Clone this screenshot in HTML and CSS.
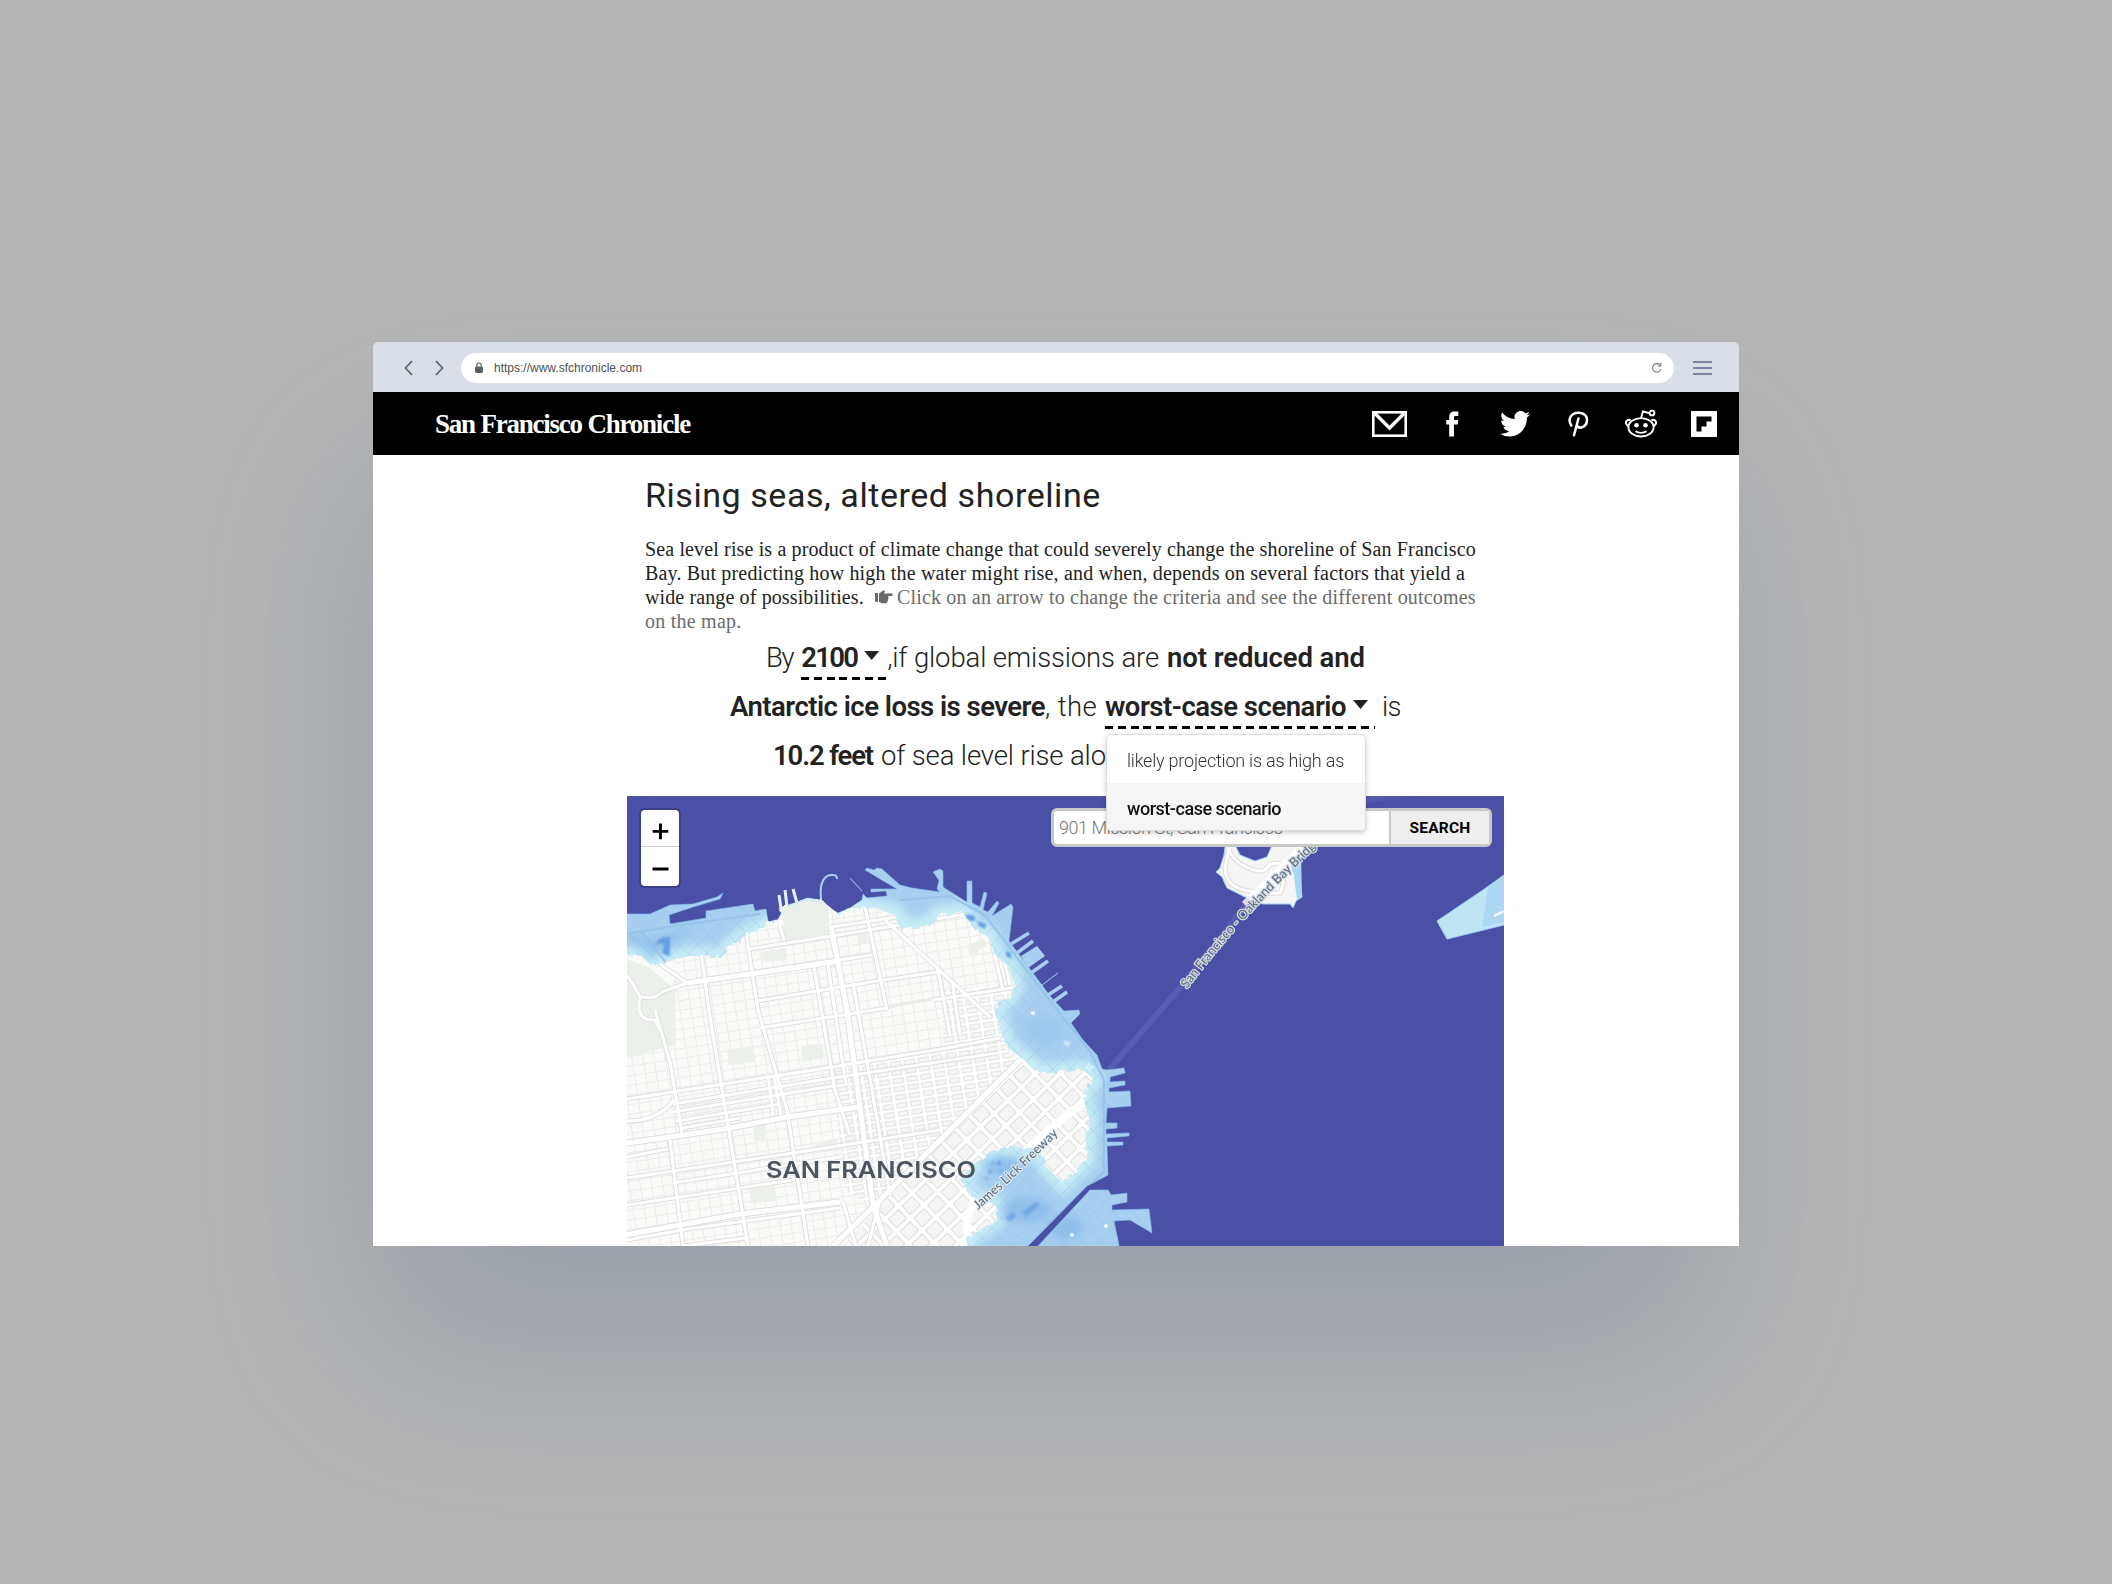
FILE: index.html
```html
<!DOCTYPE html>
<html lang="en">
<head>
<meta charset="utf-8">
<title>San Francisco Chronicle</title>
<link rel="stylesheet" href="styles.css">
</head>
<body>
<main class="window">
  <div class="chrome">
    <svg class="nav-arrows" width="40" height="16" viewBox="0 0 40 16" fill="none" stroke="#5f636b" stroke-width="1.7"><path d="M8 1 1.5 8 8 15M32 1l6.500 7L32 15"/></svg>
    <div class="address">
      <svg width="10" height="12" viewBox="0 0 10 12"><rect x="1" y="4.500" width="8" height="6.500" rx="1.800" fill="#5b5e66"/><path d="M2.800 5V3.200a2.200 2.200 0 0 1 4.400 0V5" fill="none" stroke="#5b5e66" stroke-width="1.100"/></svg>
      <span class="url">https://www.sfchronicle.com</span>
      <svg class="reload" width="12" height="12" viewBox="0 0 12 12" fill="none" stroke="#777" stroke-width="1.100"><path d="M10 7.200A4.300 4.300 0 1 1 8.900 2.800M9.800 1v3H6.800"/></svg>
    </div>
    <svg class="burger" width="19" height="14" viewBox="0 0 19 14" stroke="#5a6a86" stroke-width="1.600"><path d="M0 1h19M0 7h19M0 13h19"/></svg>
  </div>
  <header class="masthead">
    <span class="logo">San Francisco Chronicle</span>
    <nav class="share">
      <svg width="35" height="26" viewBox="0 0 35 26" fill="none" stroke="#fff"><rect x="1.300" y="1.300" width="32.400" height="23.400" stroke-width="2.600"/><path d="M3 2.500 17.500 17 32 2.500" stroke-width="3.400"/></svg>
      <svg class="fb" width="13" height="26" viewBox="0 0 13 26" fill="#fff"><path d="M3.200 25.500V13.400H.3V8.900h2.900V6.200C3.200 2.300 5 .5 8.500.5h3.800V5H9.700C8.300 5 8 5.600 8 6.700v2.200h4.200l-.5 4.500H8v12.100z"/></svg>
      <svg class="tw" width="30" height="26" viewBox="0 0 24 20" preserveAspectRatio="none" fill="#fff"><path d="M24 2.400a10 10 0 0 1-2.800.8A4.900 4.900 0 0 0 23.300.5a10 10 0 0 1-3.100 1.200 4.900 4.900 0 0 0-8.400 4.500A14 14 0 0 1 1.700 1.100a4.900 4.900 0 0 0 1.500 6.600A4.900 4.900 0 0 1 1 7.100a4.900 4.900 0 0 0 3.900 4.900 5 5 0 0 1-2.200.1 4.900 4.900 0 0 0 4.600 3.400A9.900 9.900 0 0 1 0 17.500a14 14 0 0 0 7.500 2.200c9.100 0 14-7.500 14-14v-.6A10 10 0 0 0 24 2.400z"/></svg>
      <svg class="pin" width="21" height="26" viewBox="0 0 21 26" fill="none" stroke="#fff" stroke-width="2.500" stroke-linecap="round"><path d="M3.300 14.500C-.5 9 2.500 1.700 10.500 1.700c6 0 9 3.800 8.400 8.300-.8 6.500-7.900 8.200-9.700 4.800M10.500 7.500 6 24.300"/></svg>
      <svg class="reddit" width="32" height="29" viewBox="0 0 32 29" fill="none" stroke="#fff" stroke-width="1.900"><ellipse cx="16" cy="18.300" rx="12.600" ry="9.200"/><path d="M16 9l2-6.500 6.500 1.600M5.500 11.600C3 9.500 0 12.500 1.300 15c.5 1 1.500 1.700 2.300 1.700M26.500 11.600C29 9.500 32 12.500 30.700 15c-.5 1-1.500 1.700-2.300 1.700M10.500 22.200c3 2.200 8 2.200 11 0"/><circle cx="27" cy="4" r="2.400"/><circle cx="11.500" cy="16.300" r="2.300" fill="#fff" stroke="none"/><circle cx="20.500" cy="16.300" r="2.300" fill="#fff" stroke="none"/></svg>
      <svg class="flip" width="26" height="26" viewBox="0 0 26 26"><path fill="#fff" d="M0 0h26v26H0z"/><path d="M5.500 5.500h15v5h-5v5h-5v5h-5z"/></svg>
    </nav>
  </header>
  <article class="story">
    <h1>Rising seas, altered shoreline</h1>
    <p class="intro">
      <span class="line l1">Sea level rise is a product of climate change that could severely change the shoreline of San Francisco</span>
      <span class="line l2">Bay. But predicting how high the water might rise, and when, depends on several factors that yield a</span>
      <span class="line"><span class="l3">wide range of possibilities.</span><svg class="hand" width="18" height="14" viewBox="0 0 18 14" fill="#6b6b6b"><path d="M0 3h3v9H0zM4 3.500 8.500.3c1-.3 1.600.6 1.200 1.400L9 3.500h7.600c1.500 0 1.500 2.400 0 2.400H13c.8.5.8 1.700 0 2.200.6.500.5 1.600-.2 2 .3.700 0 1.500-.7 1.700-.2 1-.8 1.500-2 1.500H7L4 12z"/></svg><span class="l4 muted">Click on an arrow to change the criteria and see the different outcomes</span></span>
      <span class="line l5 muted">on the map.</span>
    </p>
    <div class="scenario">
      <div class="row r1"><span class="by">By</span><span class="pick p1"><b>2100</b><i class="caret"></i></span><span class="emissions">,if global emissions are</span><b class="reduced">not reduced and</b></div>
      <div class="row r2"><b class="ice">Antarctic ice loss is severe</b><span class="the">, the</span><span class="pick p2"><b>worst-case scenario</b><i class="caret"></i></span><span class="is">is</span></div>
      <div class="row r3"><b class="feet">10.2 feet</b><span class="rise">of sea level rise along</span></div>
      <div class="menu">
        <div class="item">likely projection is as high as</div>
        <div class="item on">worst-case scenario</div>
      </div>
    </div>
  </article>
  <section class="map">
    <svg class="tiles" width="877" height="450" viewBox="627 796 877 450">
      <defs>
        <filter id="rag" x="-5%" y="-5%" width="110%" height="110%"><feTurbulence type="fractalNoise" baseFrequency=".16" numOctaves="2" seed="4"/><feDisplacementMap in="SourceGraphic" scale="9"/></filter>
        <filter id="soft"><feGaussianBlur stdDeviation="4"/></filter>
        <filter id="soft1"><feGaussianBlur stdDeviation="1.200"/></filter>
        <pattern id="minor" width="11" height="9.500" patternUnits="userSpaceOnUse" patternTransform="rotate(-8.800)"><path d="M0 .5h11M.5 0v9.500" stroke="#ebebea" fill="none"/></pattern>
        <pattern id="dense" width="14" height="8.300" patternUnits="userSpaceOnUse" patternTransform="translate(834 1078) rotate(-8.800)"><rect width="14" height="8.300" fill="#fff"/><rect x="2" y="1.800" width="10" height="4.700" fill="#f7f7f5" stroke="#dcdcdc" stroke-width=".9"/></pattern>
        <pattern id="soma" width="19" height="17" patternUnits="userSpaceOnUse" patternTransform="translate(873 1207) rotate(-44)"><rect width="19" height="17" fill="#fff"/><rect x="2.500" y="2.500" width="14" height="12" fill="#f5f5f3" stroke="#d9d9d9" stroke-width=".9"/></pattern>
        <pattern id="wet" width="14" height="12" patternUnits="userSpaceOnUse" patternTransform="rotate(-44)"><path d="M0 .5h14M.5 0v12" stroke="#8fbce6" stroke-opacity=".28" fill="none"/></pattern>
        <path id="dryland" d="M620 956 640 955 652 966 665 962 690 956 722 956 735 943 747 935 768 924 780 919 782 907 797 902 822 900 838 914 850 909 870 908 895 914 900 928 915 928 933 925 938 916 962 912 975 930 988 936 994 954 1008 966 1015 985 1008 997 993 1008 1000 1027 1007 1047 1022 1058 1035 1070 1050 1073 1083 1070 1092 1078 1083 1097 1088 1117 1086 1143 1087 1158 1063 1183 1047 1167 1040 1150 1010 1146 987 1154 972 1168 960 1180 973 1198 997 1206 995 1220 983 1228 967 1236 965 1256 620 1256z"/>
        <path id="flood" d="M620 914 650 914 670 905 693 904 717 897 723 893 720 899 693 907 669 915 670 924 706 918 706 911 753 904 755 911 766 909 768 922 780 919 782 907 797 902 807 898 822 900 827 907 838 913 850 908 862 900 863 894 867 898 887 896 886 891 871 892 871 889 897 889 865 870 867 868 874 870 877 868 882 869 900 885 912 888 940 892 937 889 939 880 933 872 940 869 943 871 943 887 965 901 967 902 967 881 972 881 972 903 980 907 984 892 987 893 983 910 988 912 997 901 999 903 992 916 1011 904 1013 907 1009 941 1030 969 1050 996 1064 1011 1079 1010 1080 1014 1071 1023 1083 1040 1097 1055 1102 1069 1107 1070 1124 1068 1125 1073 1110 1077 1110 1082 1125 1081 1125 1085 1109 1088 1109 1092 1130 1091 1131 1106 1107 1108 1106 1123 1117 1123 1117 1128 1106 1129 1106 1134 1129 1133 1129 1136 1107 1138 1107 1142 1123 1142 1123 1145 1107 1146 1108 1175 1087 1186 1028 1246 1028 1256 620 1256zM1038 1246 1090 1190 1108 1190 1111 1195 1127 1193 1127 1202 1112 1205 1112 1210 1149 1209 1152 1233 1130 1220 1114 1221 1120 1250 1036 1250z"/>
        <clipPath id="wetclip"><use href="#flood"/></clipPath>
        <mask id="dry"><use href="#dryland" fill="#fff" filter="url(#rag)"/></mask>
        <g id="roads" fill="none">
          <path d="M697 923 710 1017 748 1246M743 913 758 1010 787 1110 808 1246M865 907 887 1010M780 926 784 940M655 1010 670 1062 682 1133M670 1140 683 1246M814 967 835 1090 850 1135M828 965 846 1085M853 983 872 1090 890 1195M938 970 950 1035M952 980 960 1035M990 935 1003 990M997 930 1010 985M774 1076 781 1115M768 1075 773 1115"/>
          <path d="M687 983 872 955M750 949 832 936 960 915M831 927 897 917M757 1001 877 981 938 972M933 1000 1017 987M760 1028 887 1008M627 1099 833 1067 947 1048 1000 1038M673 1104 833 1078 997 1053M673 1112 833 1086M676 1121 780 1104M627 1157 668 1149M682 1128 740 1118M627 1178 793 1153 940 1130M673 1183 840 1157M627 1205 793 1180M627 1240 688 1229 840 1208M684 1246 745 1238"/>
          <path d="M640 950 687 983 670 989C655 992 662 1000 640 997C634 985 628 975 620 968M640 997C635 1020 648 1020 655 1020L660 1030M627 1121C650 1121 665 1112 674 1100M990 1017 883 918M843 1202 856 1246M868 1246 880 1200"/>
        </g>
        <g id="main" fill="none"><path d="M620 1144 670 1137 730 1128 787 1117 860 1107M831 927 847 1010 873 1205 887 1246M687 983 840 961M625 1235 740 1214 840 1202M833 1246 873 1207 1020 1060"/></g>
        <path id="island-roads" fill="none" d="M1229 848 1225 868Q1226 886 1244 890 1262 894 1280 893 1284 885 1284 874M1229 850Q1236 866 1258 871 1266 872 1270 864L1280 863"/>
        <path id="bridge" d="M1187 989Q1240 917 1326 838"/>
        <path id="freeway" d="M978 1210Q1020 1173 1064 1128"/>
      </defs>
      <path fill="#4a50a6" d="M627 796h877v450H627z"/>
      <path fill="#555ab0" d="M1360 806q30-10 70-10h-70z"/>
      <path d="M1108 1071 1184 983 1250 900" stroke="#585db2" stroke-width="6" fill="none"/>
      <use href="#flood" fill="#a8cfef" stroke="#7fc0ee" stroke-width=".6"/>
      <g fill="none" stroke="#a8cfef" stroke-width="3.500"><path d="M1011 944 1029 933M1017 953 1033 941M1031 973 1048 961M1048 995 1062 986M1053 1002 1067 992"/><path d="M1042 985 1058 973M850 878 862 891" stroke-width="1"/><path d="M821 899C819 882 825 874 833 875 836 875 837 877 837 879" stroke-width="2"/></g>
      <path fill="#a8cfef" d="M1021 956 1037 946 1045 956 1028 968z"/>
      <g clip-path="url(#wetclip)">
        <use href="#dryland" fill="none" stroke="#c6ecf6" stroke-width="20" filter="url(#soft)"/>
        <g fill="#7fb3e8" filter="url(#soft)" opacity=".6"><ellipse cx="1045" cy="1030" rx="20" ry="14" opacity=".4"/><ellipse cx="1025" cy="1210" rx="26" ry="12"/><ellipse cx="1065" cy="1228" rx="18" ry="12"/><ellipse cx="1000" cy="1165" rx="18" ry="9"/><path d="M620 932 655 940 700 921 690 930 650 960z" opacity=".8"/></g>
        <path fill="url(#wet)" d="M960 880h180v370H960zM627 900h150v60H627z"/>
        <g fill="#639fe1" filter="url(#soft1)"><path d="M655 945q5-10 15-8v18q-6 2-8-4 4-5 0-8z"/><path d="M966 914l8 2 2 5-6 0-4-3zM977 921l9 3-1 5-6-3zM1006 951l5 2v6l-5-3z"/><g opacity=".7"><circle cx="990" cy="1172" r="2"/><circle cx="999" cy="1163" r="2.500"/><circle cx="993" cy="1163" r="1.500"/><circle cx="1001" cy="1171" r="1.500"/><circle cx="986" cy="1178" r="1.500"/><path d="M1005 1218l8-6 3 4-6 6zM1022 1212l14-10 4 3-14 12z"/></g></g>
        <path d="M620 935 680 925 760 914M640 930 668 965M900 900 950 896 985 915 1030 975 1090 1052 1104 1080V1172L1060 1215" fill="none" stroke="#93bfe8" stroke-width="2" opacity=".8"/>
        <g fill="#eefafd"><circle cx="1033" cy="1013" r="2"/><circle cx="1106" cy="1226" r="2"/><circle cx="1072" cy="1235" r="2"/><path d="M1065 1040l6 3-3 4-5-3zM1088 1062l6 5-4 5-5-4z" opacity=".5"/></g>
      </g>
      <g mask="url(#dry)">
        <path fill="#fafaf8" d="M620 880h500v370H620z"/>
        <path fill="url(#minor)" d="M675 900h340v346H627V1055l48-14z"/>
        <g fill="#ebf0ea"><path d="M782 907 797 901 822 899 829 908V933L785 942zM620 966l10-6 20 8 25 22 1 55-56 14zM762 952l24-4 1 12-24 2zM727 1050l24-4 3 16-25 3zM802 1046l20-3 2 15-22 4zM753 1127l11-2 1 15-11 1zM750 1190l24-4 2 15-25 2zM858 935l9-2 1 10-9 1zM968 945l15-7 4 8-8 3-3 8-7-3zM815 1143l22-5v6l-22 5zM627 1236l60-14-20 10-40 8z"/></g>
        <path fill="#ececea" d="M887 1009 933 1000v-3l-46 8z"/>
        <path fill="url(#dense)" d="M832 1068 944 1050 942 990 1010 985 1006 1050 1022 1062 873 1207 845 1190z"/>
        <path fill="url(#soma)" d="M1022 1058 1110 1050 1110 1256 833 1256z"/>
        <use href="#roads" stroke="#dedede" stroke-width="5"/>
        <use href="#main" stroke="#dedede" stroke-width="7"/>
        <use href="#roads" stroke="#fff" stroke-width="3.200"/>
        <use href="#main" stroke="#fff" stroke-width="5.200"/>
        <path d="M1090 1097 1057 1123 990 1183Q967 1206 967 1225V1250" fill="none" stroke="#fff" stroke-width="8"/>
      </g>
      <path d="M779 895 781 908M785 890 787 907M793 889 797 903" stroke="#e4eff4" stroke-width="3" fill="none"/>
      <path d="M1226 840 1224 855 1220 868 1216 872 1222 877 1227 888 1247 898 1263 904 1290 904 1293 908 1296 901 1302 897 1300 877 1301 858 1320 845 1273 843 1267 857 1255 861 1240 855 1234 843z" fill="#f4f5f4" stroke="#9fd0f2"/>
      <path d="M1301 855 1302 896 1297 900 1294 875 1291 866z" fill="#a9d6f3"/>
      <use href="#island-roads" stroke="#dcdcdc" stroke-width="5"/>
      <use href="#island-roads" stroke="#fff" stroke-width="3"/>
      <path d="M1244 904 1306 842" stroke="#fff" stroke-width="6" opacity=".8"/>
      <path d="M1437 921 1483 890 1504 875V925L1447 939z" fill="#bfe5f4" stroke="#9bd1f3"/><path d="M1488 888 1504 876V922L1482 927z" fill="#acd7f3"/><path d="M1494 916l10-5" stroke="#fff" stroke-width="2"/>
      <text class="road halo"><textPath href="#bridge">San Francisco - Oakland Bay Bridge</textPath></text>
      <text class="road halo2"><textPath href="#freeway">James Lick Freeway</textPath></text>
      <text class="city" x="766" y="1178" textLength="210" lengthAdjust="spacingAndGlyphs">SAN FRANCISCO</text>
    </svg>
    <div class="zoom"><svg width="38" height="37" viewBox="0 0 38 37"><path d="M11.500 22h16M19.500 14v16" stroke="#000" stroke-width="3"/></svg><svg width="38" height="38" viewBox="0 0 38 38"><path d="M11.500 22h16" stroke="#000" stroke-width="3"/></svg></div>
    <div class="search"><span class="field">901 Mission St, San Francisco</span><span class="go">SEARCH</span></div>
  </section>
</main>
</body>
</html>
```
FILE: styles.css
```css
* { box-sizing: border-box; }
body { margin: 0; width: 2112px; height: 1584px; overflow: hidden; background: #b5b5b5; display: flex; justify-content: center; align-items: flex-start; padding-top: 342px; font-family: Roboto, "Liberation Sans", sans-serif; }
.window { width: 1366px; height: 904px; background: #fff; border-radius: 6px 6px 0 0; box-shadow: -20px 120px 170px -15px rgba(116, 130, 152, .4); display: flex; flex-direction: column; position: relative; }
.chrome { height: 50px; flex: none; background: #dadee7; border-radius: 6px 6px 0 0; display: flex; align-items: center; padding: 1px 0 0 31px; }
.address { width: 1213px; height: 30px; margin-left: 17px; background: #fff; border-radius: 15px; display: flex; align-items: center; padding: 0 11px 0 13px; }
.url { margin-left: 10px; padding-top: 1px; font: 12px "Liberation Sans", sans-serif; color: #505050; white-space: nowrap; }
.reload { margin-left: auto; }
.burger { margin-left: 19px; }
.masthead { height: 63px; flex: none; background: #000; display: flex; align-items: center; padding: 0 22px 0 62px; }
.logo { color: #fff; font: bold 27px "Liberation Serif", serif; white-space: nowrap; letter-spacing: -1.220px; padding-top: 1px; }
.share { margin-left: auto; display: flex; align-items: center; }
.fb { margin-left: 39px; }
.tw { margin-left: 41px; }
.pin { margin-left: 38px; }
.reddit { margin-left: 36px; }
.flip { margin-left: 34px; }
.story { height: 341px; flex: none; padding-left: 272px; white-space: nowrap; }
h1 { margin: 18px 0 0; height: 44px; font-size: 34px; line-height: 44px; font-weight: 400; color: #222; letter-spacing: .560px; }
.intro { margin: 20px 0 0; font: 20px/24px "Liberation Serif", serif; color: #222; }
.line { display: flex; align-items: center; height: 24px; }
.l1 { letter-spacing: .135px; }
.l2 { letter-spacing: .170px; }
.l3 { letter-spacing: .120px; }
.l4 { letter-spacing: .180px; }
.l5 { letter-spacing: .240px; }
.muted { color: #6b6b6b; }
.hand { margin: 0 4px 0 11px; }
.scenario { position: relative; font-size: 27.500px; font-weight: 300; color: #222; }
.scenario b { font-weight: 600; letter-spacing: -.480px; }
.row { display: flex; height: 49px; line-height: 49px; }
.r1 { padding-left: 121px; }
.r2 { padding-left: 85px; }
.r3 { padding-left: 128px; }
.by { letter-spacing: -1.400px; }
.emissions { margin-left: 1px; letter-spacing: -.130px; }
.scenario .reduced { margin-left: 8px; letter-spacing: -.100px; }
.scenario .ice { letter-spacing: -.520px; }
.the { letter-spacing: .370px; }
.is { margin-left: 7px; letter-spacing: -.800px; }
.scenario .feet { letter-spacing: -1.120px; }
.rise { margin-left: 8px; letter-spacing: -.140px; }
.pick { display: flex; height: 47px; background: repeating-linear-gradient(90deg, #000 0 8px, transparent 8px 12.800px) left bottom / 100% 3px no-repeat; }
.scenario .p1 b { letter-spacing: -1.710px; }
.p1 { margin-left: 8px; }
.p2 { margin-left: 8px; }
.caret { width: 15px; height: 9px; background: #222; clip-path: polygon(0 0, 100% 0, 50% 100%); margin: 18px 7px 0 7px; }
.menu { position: absolute; z-index: 2; left: 461px; top: 101px; width: 260px; height: 97px; background: #fff; border: 1px solid #dcdcdc; border-radius: 5px; box-shadow: 0 2px 5px rgba(0,0,0,.2); overflow: hidden; font-size: 18px; color: #333; letter-spacing: -.210px; }
.item { height: 48px; line-height: 51px; padding-left: 20px; }
.on { background: #f6f6f7; color: #111; font-weight: 500; letter-spacing: -.470px; }
.map { position: relative; width: 877px; height: 450px; margin-left: 254px; }
.tiles { display: block; }
.road { font: 500 12.800px Lato, sans-serif; fill: #5f707f; paint-order: stroke; stroke-linejoin: round; }
.halo { stroke: #d5dbe4; stroke-width: 2.500px; }
.halo2 { stroke: #e6eef4; stroke-width: 2px; }
.city { font: 600 23.500px Inter, sans-serif; fill: #4a5561; }
.zoom { position: absolute; left: 12px; top: 12px; width: 42px; height: 80px; border: 2px solid #3c4187; border-radius: 6px; background: #fff; display: flex; flex-direction: column; }
.zoom svg:first-child { border-bottom: 1px solid #ccc; }
.search { position: absolute; left: 424px; top: 12px; width: 441px; height: 39px; border: 3px solid #c8c8c8; border-radius: 6px; background: #fff; display: flex; font-size: 18px; font-weight: 300; line-height: 34px; white-space: nowrap; color: #777; letter-spacing: -.430px; }
.field { width: 335px; padding-left: 5px; }
.go { flex: 1; background: #eee; border-left: 2px solid #c8c8c8; text-align: center; font-size: 15.500px; font-weight: 700; color: #000; letter-spacing: .220px; }
```
